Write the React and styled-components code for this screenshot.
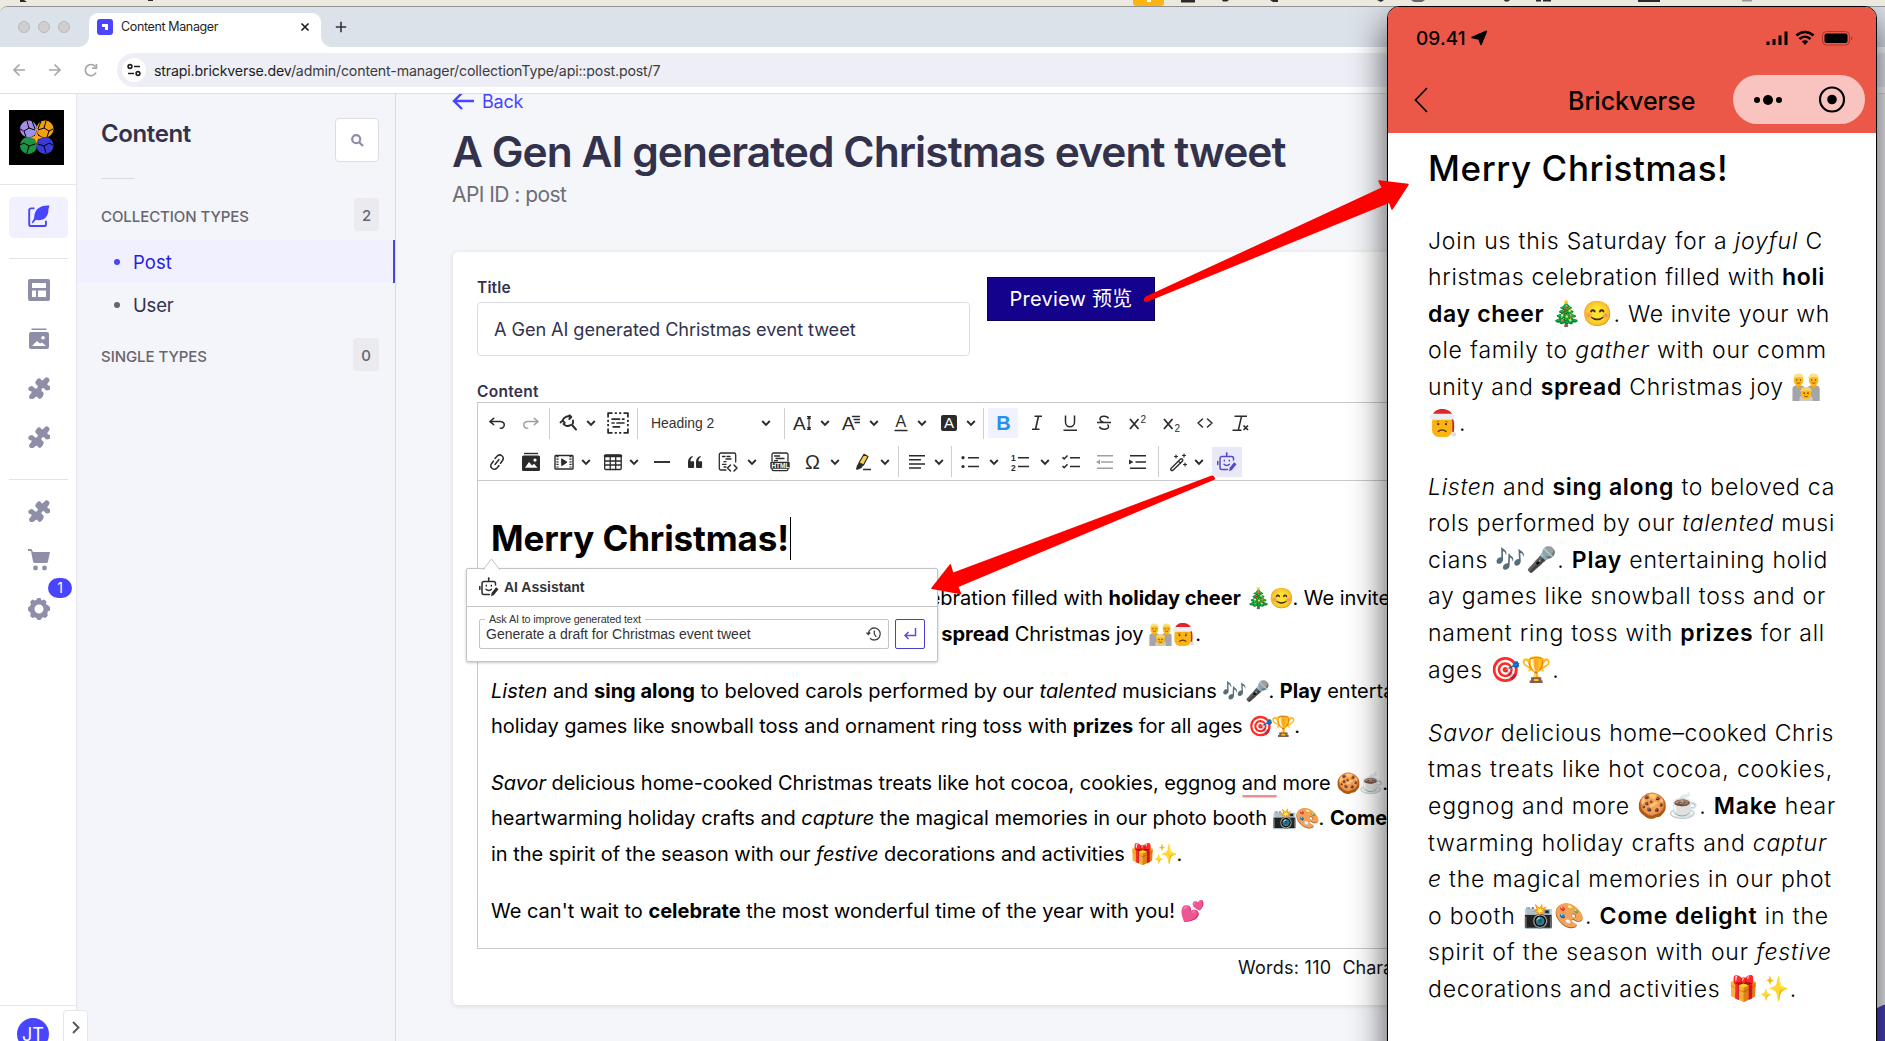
import React from "react";
import styled, { createGlobalStyle, css } from "styled-components";

const Global = createGlobalStyle`
  *, *::before, *::after { box-sizing: border-box; }
  html, body { margin: 0; padding: 0; }
  body { width: 1885px; height: 1041px; overflow: hidden; font-family: Inter, "Noto Sans CJK SC", "Liberation Sans", sans-serif; }
  h1, h2, p { margin: 0; font-weight: inherit; }
`;

const Desktop = styled.div`
  position: relative;
  width: 1885px;
  height: 1041px;
  overflow: hidden;
  display: flex;
  flex-direction: column;
  background: #ece9e0;
`;
const MenuBar = styled.div`
  height: 6px;
  flex: none;
  background: #ece9df;
  svg { display: block; }
`;
const Browser = styled.div`
  flex: 1;
  min-height: 0;
  display: flex;
  flex-direction: column;
  border-top: 1px solid #8f9092;
  border-top-left-radius: 8px;
  background: #fff;
  overflow: hidden;
`;
const Text = styled.span`
  white-space: pre;
  letter-spacing: ${(p) => p.$ls || 0}px;
`;

/* ---- tab strip ---- */
const TabStrip = styled.div`
  height: 40px;
  flex: none;
  display: flex;
  align-items: flex-end;
  background: #dce2e9;
`;
const Lights = styled.div`
  width: 89px;
  height: 40px;
  display: flex;
  align-items: center;
  gap: 8px;
  padding-left: 18px;
  background: #dce2e9;
`;
const Light = styled.i`
  width: 12px;
  height: 12px;
  border-radius: 50%;
  background: #cfcfcf;
  border: 1px solid #b9b9b9;
`;
const Tab = styled.div`
  position: relative;
  width: 232px;
  height: 34px;
  padding: 0 11px 6px 8px;
  display: flex;
  align-items: center;
  background: #fff;
  border-radius: 9px 9px 0 0;
  font-size: 12.5px;
  line-height: 16px;
  color: #1f1f1f;
  &::before, &::after {
    content: "";
    position: absolute;
    bottom: 0;
    width: 10px;
    height: 10px;
  }
  &::before { left: -10px; background: radial-gradient(circle at 0 0, #dce2e9 9.5px, #fff 10px); }
  &::after { right: -10px; background: radial-gradient(circle at 100% 0, #dce2e9 9.5px, #fff 10px); }
`;
const Favicon = styled.span`
  width: 16px;
  height: 16px;
  margin-right: 8px;
  border-radius: 3px;
  background: #4945ff;
  svg { display: block; }
`;
const TabClose = styled.svg`
  margin-left: auto;
`;
const NewTab = styled.svg`
  margin: 0 0 14px 14px;
`;

/* ---- address bar ---- */
const AddressRow = styled.div`
  height: 47px;
  flex: none;
  display: flex;
  align-items: center;
  border-bottom: 1px solid #dedfe3;
  background: #fff;
`;
const NavGlyphs = styled.svg`
  display: block;
  flex: none;
`;
const AddressField = styled.div`
  flex: 1;
  height: 34px;
  display: flex;
  align-items: center;
  padding-left: 5px;
  border-radius: 17px 0 0 17px;
  background: #edeef6;
  font-size: 14.2px;
  color: #3c3c40;
  b { font-weight: 400; color: #1d1d1f; }
`;
const SiteInfo = styled.span`
  width: 24px;
  height: 24px;
  margin-right: 8px;
  border-radius: 50%;
  background: #fff;
`;

/* ---- page ---- */
const Body = styled.div`
  flex: 1;
  min-height: 0;
  display: flex;
  background: #f5f6fa;
`;
const Rail = styled.nav`
  position: relative;
  width: 77px;
  flex: none;
  border-right: 1px solid #e3e3e9;
  background: #fff;
  display: flex;
  flex-direction: column;
`;
const RailLogo = styled.div`
  height: 91px;
  flex: none;
  padding: 16px 0 0 9px;
  border-bottom: 1px solid #e6e6ea;
  svg { display: block; }
`;
const RailItem = styled.div`
  position: relative;
  width: 59px;
  height: ${(p) => (p.$active ? 41 : 49)}px;
  margin-left: 9px;
  margin-top: ${(p) => p.$mt || 0}px;
  padding: ${(p) => (p.$active ? 8 : 13)}px 0 0 19px;
  flex: none;
  border-radius: 5px;
  background: ${(p) => (p.$active ? "#f0f0ff" : "transparent")};
  color: ${(p) => (p.$active ? "#4945ff" : "#8e8ea9")};
  svg { display: block; }
`;
const RailRule = styled.div`
  width: 59px;
  height: 1px;
  flex: none;
  margin: ${(p) => p.$m} 0 0 9px;
  background: #e3e3e9;
`;
const Badge = styled.span`
  position: absolute;
  top: -7px;
  left: 39px;
  width: 24px;
  height: 20px;
  border-radius: 10px;
  background: #4945ff;
  color: #fff;
  font-size: 14px;
  line-height: 20px;
  text-align: center;
`;
const RailFooter = styled.div`
  margin-top: auto;
  height: 36px;
  flex: none;
  border-top: 1px solid #e6e6ea;
  padding: 12px 0 0 17px;
  overflow: hidden;
`;
const Avatar = styled.div`
  width: 32px;
  height: 32px;
  border-radius: 50%;
  background: #4945ff;
  color: #fff;
  font-size: 18px;
  line-height: 33px;
  text-align: center;
`;
const Expand = styled.div`
  position: absolute;
  left: 63px;
  bottom: -9px;
  width: 25px;
  height: 40px;
  border: 1px solid #e6e6ea;
  border-radius: 4px;
  background: #fff;
  svg { display: block; }
`;
const SubNav = styled.aside`
  width: 319px;
  flex: none;
  border-right: 1px solid #d9dae2;
  background: #f4f5fa;
`;
const SubHead = styled.div`
  display: flex;
  justify-content: space-between;
  align-items: flex-start;
  padding: 24px 16px 0 24px;
  font-size: 24px;
  line-height: 32px;
  font-weight: 600;
  color: #32324d;
`;
const SearchBox = styled.div`
  width: 44px;
  height: 44px;
  border: 1px solid #dcdce4;
  border-radius: 4px;
  background: #fff;
  display: flex;
  align-items: center;
  justify-content: center;
`;
const SubRule = styled.div`
  width: 33px;
  height: 1px;
  margin: 16px 0 0 24px;
  background: #d9d9e0;
`;
const Group = styled.div`
  height: 33px;
  margin-top: ${(p) => p.$mt}px;
  padding: 0 16px 0 24px;
  display: flex;
  align-items: center;
  justify-content: space-between;
  font-size: 15px;
  line-height: 20px;
  font-weight: 500;
  color: #66666f;
  & > :first-child { padding-top: 4px; }
`;
const Count = styled.span`
  width: ${(p) => p.$w}px;
  height: 33px;
  border-radius: 4px;
  background: #eaeaef;
  text-align: center;
  line-height: 35px;
`;
const Entry = styled.div`
  height: 43px;
  margin-top: ${(p) => p.$mt || 0}px;
  padding-left: 37px;
  display: flex;
  align-items: center;
  font-size: 18.5px;
  color: ${(p) => (p.$active ? "#271fe0" : "#32324d")};
  background: ${(p) => (p.$active ? "#f0f0ff" : "transparent")};
  border-right: ${(p) => (p.$active ? "2px solid #4945d8" : "0")};
  i {
    width: 6px;
    height: 6px;
    margin-right: 13px;
    border-radius: 50%;
    background: ${(p) => (p.$active ? "#4945ff" : "#66666f")};
  }
`;

const Main = styled.main`
  flex: 1;
  min-width: 0;
  padding-left: 57px;
  display: flex;
  flex-direction: column;
  align-items: flex-start;
  overflow: hidden;
`;
const Back = styled.div`
  flex: none;
  margin: -4px 0 0 -1px;
  height: 22px;
  display: flex;
  align-items: center;
  gap: 8px;
  font-size: 18px;
  color: #4945ff;
`;
const PageTitle = styled.h1`
  flex: none;
  margin: 14px 0 0 -1px;
  font-size: 42.5px;
  line-height: 52px;
  font-weight: 600;
  color: #32324d;
`;
const ApiId = styled.div`
  flex: none;
  margin: 3px 0 0 -1px;
  font-size: 21px;
  line-height: 28px;
  color: #6d6d76;
`;
const Card = styled.section`
  flex: none;
  width: 1060px;
  height: 753px;
  margin-top: 43px;
  padding: 25px 25px 0;
  border-radius: 5px;
  background: #fff;
  box-shadow: 0 1px 5px rgba(33, 33, 52, 0.14);
`;
const TitleRow = styled.div`
  display: flex;
  gap: 17px;
  align-items: flex-start;
`;
const Label = styled.div`
  height: 20px;
  line-height: 22px;
  margin: ${(p) => p.$mt || 0}px 0 0 -1px;
  font-size: 15.5px;
  font-weight: 600;
  color: #32324d;
`;
const Input = styled.div`
  width: 493px;
  height: 54px;
  margin: 5px 0 0 -1px;
  padding-left: 16px;
  border: 1px solid #dcdce4;
  border-radius: 4px;
  font-size: 18.2px;
  line-height: 53px;
  color: #32324d;
`;
const Preview = styled.div`
  width: 168px;
  height: 44px;
  background: #14028c;
  border: 1px solid #0a0050;
  color: #fff;
  font-size: 20px;
  line-height: 43px;
  text-align: center;
`;
const Editor = styled.div`
  width: 1004px;
  height: 547px;
  margin: 1px 0 0 -1px;
  border: 1px solid #c9c9cd;
  color: #000;
`;
const ToolbarRow = styled.div`
  height: ${(p) => p.$h}px;
  display: flex;
  align-items: center;
  ${(p) => p.$last && css`border-bottom: 1px solid #c9c9cd;`}
`;
const Tool = styled.span`
  width: ${(p) => p.$w || 20}px;
  height: ${(p) => (p.$on ? 30 : 20)}px;
  margin-left: ${(p) => p.$g}px;
  flex: none;
  display: flex;
  align-items: center;
  justify-content: center;
  background: ${(p) => p.$on || "transparent"};
  svg { display: block; overflow: visible; }
`;
const Divider = styled.span`
  width: 1px;
  height: 31px;
  margin-left: ${(p) => p.$g}px;
  flex: none;
  background: #ccced1;
`;
const HeadingSelect = styled.span`
  width: 110px;
  margin-left: 13px;
  flex: none;
  font-family: "Liberation Sans", Arial, sans-serif;
  font-size: 13.9px;
  line-height: 18px;
  color: #333;
`;
const Copy = styled.div`
  padding: 35px 0 0 13px;
`;
const EditorHeading = styled.h2`
  display: flex;
  align-items: center;
  height: 44px;
  margin-bottom: 21.4px;
  font-size: 35px;
  font-weight: 700;
`;
const Caret = styled.i`
  width: 1px;
  height: 43px;
  margin-left: 1px;
  background: #000;
`;
const Para = styled.p`
  margin-bottom: 21px;
  font-size: 20px;
  b { font-weight: 700; }
`;
const Line = styled.span`
  display: block;
  height: 35.6px;
  line-height: 35.6px;
  white-space: pre;
  letter-spacing: ${(p) => p.$ls || 0}px;
`;
const Emo = styled.span`
  display: inline-block;
  width: 1.15em;
  height: 1em;
  line-height: 1em;
  letter-spacing: 0;
  text-align: center;
  font-family: "Noto Color Emoji", sans-serif;
  svg { width: 1.15em; height: 1.15em; vertical-align: -0.24em; }
`;
const Misspelled = styled.span`
  box-shadow: 0 3px 0 -0.5px #f28b8b;
  display: inline-block;
  line-height: 24px;
`;
const Counts = styled.div`
  display: flex;
  gap: 11px;
  margin: 7px 0 0 760px;
  font-size: 18px;
  line-height: 24px;
  color: #111;
`;

/* ---- AI assistant balloon ---- */
const Balloon = styled.div`
  position: absolute;
  left: 466px;
  top: 568px;
  width: 472px;
  height: 94px;
  border: 1px solid #c4c4c8;
  border-radius: 2px;
  background: #fff;
  box-shadow: 0 1px 3px rgba(0, 0, 0, 0.22);
  font-family: "Liberation Sans", Arial, sans-serif;
  color: #333;
`;
const BalloonTip = styled.svg`
  position: absolute;
  left: 15px;
  top: -11px;
`;
const BalloonHead = styled.div`
  height: 38px;
  padding: 0 0 1px 12px;
  display: flex;
  align-items: center;
  gap: 5px;
  border-bottom: 1px solid #c4c4c8;
  font-size: 14px;
  font-weight: 700;
`;
const BalloonBody = styled.div`
  display: flex;
  gap: 6px;
  padding: 12px 0 0 12px;
`;
const Prompt = styled.div`
  position: relative;
  width: 410px;
  height: 30px;
  padding: 0 6px 0 6px;
  display: flex;
  align-items: center;
  justify-content: space-between;
  border: 1px solid #c4c4c8;
  border-radius: 2px;
  font-size: 14px;
  line-height: 28px;
`;
const PromptLabel = styled.span`
  position: absolute;
  left: 5px;
  top: -8px;
  padding: 0 4px;
  background: #fff;
  font-size: 10.8px;
  line-height: 14px;
`;
const Submit = styled.div`
  width: 30px;
  height: 30px;
  border: 1px solid #4a40c8;
  border-radius: 2px;
  display: flex;
  align-items: center;
  justify-content: center;
`;

/* ---- phone ---- */
const Phone = styled.section`
  position: absolute;
  left: 1387px;
  top: 6px;
  width: 490px;
  height: 1100px;
  border: 1px solid #000;
  border-radius: 12px;
  overflow: hidden;
  background: #fff;
`;
const PhoneShade = styled.div`
  position: absolute;
  left: 1387px;
  top: 8px;
  width: 490px;
  height: 1100px;
  border-radius: 12px;
  box-shadow: 0 14px 36px rgba(0, 0, 0, 0.7);
  clip-path: inset(-1px -20px -20px -60px);
`;
const PhoneHead = styled.header`
  height: 126px;
  background: #eb5847;
  color: #000;
`;
const StatusBar = styled.div`
  height: 61px;
  padding: 1px 22px 0 28px;
  display: flex;
  align-items: center;
  font-size: 19px;
  font-weight: 500;
  svg { display: block; }
`;
const LocationArrow = styled.svg`
  margin-left: 4px;
`;
const StatusIcons = styled.svg`
  margin-left: auto;
`;
const NavRow = styled.div`
  height: 65px;
  display: flex;
  align-items: center;
  padding: 0 11px 2px 26px;
  font-size: 25px;
  font-weight: 500;
`;
const NavTitle = styled.div`
  width: 127px;
  margin-left: 140px;
  padding-top: 2px;
`;
const Capsule = styled.div`
  width: 132px;
  height: 49px;
  margin-left: auto;
  border-radius: 25px;
  background: #f9c4bf;
  svg { display: block; }
`;
const PhoneCopy = styled.div`
  padding: 13px 0 0 40px;
  font-size: 23px;
  font-weight: 350;
  b { font-weight: 600; }
  ${Emo} { width: 31px; font-size: 24.5px; }
  ${Line} { height: 36.6px; line-height: 36.6px; }
`;
const PhoneHeading = styled.h2`
  height: 44px;
  margin-bottom: 32.5px;
  font-size: 35px;
  line-height: 44px;
  font-weight: 500;
`;
const PhonePara = styled.p`
  margin-bottom: 26.6px;
`;
const Overlay = styled.svg`
  position: absolute;
  left: 0;
  top: 0;
  pointer-events: none;
`;
const HelpBubble = styled.i`
  position: absolute;
  left: 1864px;
  top: 940px;
  width: 60px;
  height: 60px;
  margin-top: 63px;
  border-radius: 50%;
  background: #4a42c4;
`;

/* ---- icons ---- */
const Ico = ({ children, s = 20, ...p }) => (
  <svg width={s} height={s} viewBox="0 0 20 20" fill="none" stroke="#2b2b2b" strokeWidth="1.5" strokeLinecap="round" strokeLinejoin="round" {...p}>
    {children}
  </svg>
);
const Chev = ({ g }) => (
  <Tool $g={g} $w={10}>
    <svg width="10" height="10" viewBox="0 0 10 10" fill="none" stroke="#2b2b2b" strokeWidth="1.9"><path d="M1.2 3l3.8 3.8L8.8 3" /></svg>
  </Tool>
);
const T = ({ x, y, size, children, ...p }) => (
  <text x={x} y={y} fontSize={size} stroke="none" fill="#2b2b2b" fontFamily="Liberation Sans, Arial, sans-serif" {...p}>{children}</text>
);
const UndoPath = "m5.042 9.367 2.189 1.837a.75.75 0 0 1-.965 1.149l-3.788-3.18a.747.747 0 0 1-.21-.284.75.75 0 0 1 .17-.945L6.23 4.762a.75.75 0 1 1 .964 1.15L4.863 7.866h8.917A.75.75 0 0 1 14 7.9a4 4 0 1 1-1.477 7.718l.344-1.489a2.5 2.5 0 1 0 1.094-4.73l.008-.032H5.042z";
const Robot = ({ c = "#2b2b2b", s = 20 }) => (
  <svg width={s} height={s} viewBox="0 0 20 20" fill="none" stroke={c} strokeWidth="1.5" strokeLinecap="round" strokeLinejoin="round">
    <path d="M10.5 17.5H5a2 2 0 0 1-2-2V6.500a2 2 0 0 1 2-2h9.500a2 2 0 0 1 2 2v1.500M9.700 4.300V2M.800 9.500v3" />
    <circle cx="9.700" cy="1.300" r="1" fill={c} stroke="none" />
    <path d="M7.300 8.300v.8M12.300 8.300v.8M7 12.300c1.500 1.600 4 1.600 5.500 0" strokeWidth="1.400" />
    <path d="M18.300 11.200l-4.800 6" strokeWidth="3" strokeLinecap="butt" />
    <path d="M12.800 16l-.8 3.200 3-1.300z" fill={c} stroke="none" />
  </svg>
);
const Puzzle = () => (
  <svg width="22" height="22" viewBox="0.300 0.300 23.400 23.400" fill="currentColor">
    <path d="M10 3a2.400 2.400 0 0 1 4.200 0l.8 1.100 1.300-.5 1.600-1.800a2.900 2.900 0 0 1 4.500 3.700l-1.500 2 .3 1.600 1.600.4a2.400 2.400 0 0 1 0 4.500l-2.200.7-1.700-.7-1.100-1.400a2 2 0 0 0-2.800 2.800l1.400 1.200.7 1.600-.8 2.300-1.400 1.900a2.400 2.400 0 0 1-4.200 0l-.8-1.300-1.400.5-2.100 1.600a2.700 2.700 0 0 1-4-4l1.700-2.200-.2-1.500-1.800-.4a2.400 2.400 0 0 1 0-4.500l1.900-.7 1.700.5 1.500 1.500a2 2 0 0 0 2.900-2.800L8.700 8 8 6.400l.6-1.900z" />
  </svg>
);
const Parent = ({ x }) => (
  <g transform={`translate(${x} 0)`}>
    <path d="M.5 30V17c0-3 2.500-4 6.500-4s6.500 1 6.500 4v13z" fill="#a3a5aa" />
    <path d="M5 12h4v3.500L7 17l-2-1.500z" fill="#f4a810" />
    <rect x="2" y="2" width="10" height="11.500" rx="4.800" fill="#fcb91c" />
    <path d="M1.500 6C1.500 2 3.500.5 7 .5S12.500 2 12.500 6L11 4.800 7 4.200 3 4.800z" fill="#fbe08a" />
    <circle cx="5" cy="7.500" r=".8" fill="#6b3a10" /><circle cx="9" cy="7.500" r=".8" fill="#6b3a10" />
    <path d="M5 10.300q2 1.500 4 0" fill="none" stroke="#8a4a10" />
  </g>
);
const Family = () => (
  <svg viewBox="0 0 30 30">
    <Parent x={0} /><Parent x={16} />
    <path d="M8 30v-3c0-2 2.500-3.500 7-3.500s7 1.500 7 3.500v3z" fill="#c9cbd0" />
    <rect x="9.500" y="16" width="11" height="12" rx="5.200" fill="#fcb91c" />
    <path d="M9 20c0-4 2.500-5.200 6-5.200s6 1.200 6 5.200l-2-1.200h-8z" fill="#f8d45c" />
    <circle cx="13" cy="21.500" r=".9" fill="#6b3a10" /><circle cx="17" cy="21.500" r=".9" fill="#6b3a10" />
    <path d="M13 24.500q2 1.800 4 0" fill="none" stroke="#8a4a10" />
  </svg>
);
const Santa = () => (
  <svg viewBox="1 1 29 29">
    <path d="M22 6c5 3 5.500 11 4.500 19l-2.500-1z" fill="#c8242c" />
    <path d="M4 9C6 3 9 1 14.500 1S24 3 26 9z" fill="#e0242c" />
    <rect x="4" y="7" width="21" height="23" rx="7.500" fill="#fbb416" />
    <rect x="2" y="6" width="25" height="6" rx="3" fill="#eceef2" />
    <circle cx="26.500" cy="27" r="2.300" fill="#d9dce2" />
    <path d="M8.500 14.500l3-1M20.500 14.500l-3-1" stroke="#a86a08" strokeWidth="1" />
    <circle cx="10.500" cy="16.500" r="1.200" fill="#5a3208" /><circle cx="18.500" cy="16.500" r="1.200" fill="#5a3208" />
    <path d="M10 24.500q4.500-4 9 0" fill="none" stroke="#5a3208" strokeWidth="1.400" />
  </svg>
);

export default function App() {
  return (
    <>
      <Global />
      <Desktop>
        <MenuBar>
          <svg width="1885" height="6">
            <g fill="#2a2a2a">
              <path d="M20 0h4l3 2h-7zM148 0h5v1h-5z" />
              <path d="M1181 0h14v2.500h-14zM1222 0h7l-2 1.500h-4zM1270 0h8v2h-5zM1377 0h7l-3 2zM1504 0h6l-2 1.500h-3zM1536 0h5v1.500h-5zM1543 0h8v1.500h-8zM1638 0h22v2h-22z" />
              <path d="M1411 0h14l-3 2h-8z" fill="#666" />
              <path d="M1742 0h10v1.500h-10z" fill="#999" />
            </g>
            <path d="M1133 0h31v3a3 3 0 0 1-3 3h-25a3 3 0 0 1-3-3z" fill="#fdb515" />
            <path d="M1147 0h4v2h-4z" fill="#fff" />
          </svg>
        </MenuBar>
        <Browser>
          <TabStrip>
            <Lights><Light /><Light /><Light /></Lights>
            <Tab>
              <Favicon><svg width="16" height="16"><path d="M5 5h6v6H8V8H5z" fill="#fff" /></svg></Favicon>
              <Text $ls={-0.37}>Content Manager</Text>
              <TabClose width="10" height="10" stroke="#1f1f1f" strokeWidth="1.7"><path d="M1.500 1.500l7 7M8.500 1.500l-7 7" /></TabClose>
            </Tab>
            <NewTab width="12" height="12" stroke="#333" strokeWidth="1.6"><path d="M6 .8v10.400M.8 6h10.400" /></NewTab>
          </TabStrip>
          <AddressRow>
            <NavGlyphs width="117" height="46" fill="none" stroke="#a6a7aa" strokeWidth="1.700">
              <path d="M25 23H14M19.500 17.500L14 23l5.500 5.500M49 23h11M54.500 17.500L60 23l-5.500 5.500" />
              <path d="M96 25.500a5.600 5.600 0 1 1-.8-6M96.400 17v4.200h-4.200" />
            </NavGlyphs>
            <AddressField>
              <SiteInfo>
                <svg width="24" height="24" fill="none" stroke="#1f1f1f" strokeWidth="1.600"><circle cx="8" cy="8.500" r="1.900" /><path d="M12 8.500h6M6 15.500h6" /><circle cx="16" cy="15.500" r="1.900" /></svg>
              </SiteInfo>
              <Text $ls={-0.16}><b>strapi.brickverse.dev</b>/admin/content-manager/collectionType/api::post.post/7</Text>
            </AddressField>
          </AddressRow>
          <Body>
            <Rail>
              <RailLogo>
                <svg width="55" height="55" viewBox="0 0 55 55">
                  <rect width="55" height="55" fill="#000" />
                  <circle cx="19.500" cy="19" r="8.500" fill="#9c92ea" />
                  <circle cx="36" cy="19" r="8.500" fill="#f0a010" />
                  <circle cx="19.500" cy="35.500" r="8.500" fill="#1e9144" />
                  <circle cx="36" cy="35.500" r="8.500" fill="#3a3ad8" />
                  <g stroke="#000" strokeWidth="1" fill="none">
                    <path d="M15 21l5-3 6 2M20 18l-2-7M15 21l-4-2M15 21l2 6M40 21l-5-3-6 2M35 18l2-7M40 21l4-2M40 21l-2 6M15 33l5 3 6-2M20 36l-2 7M15 33l-4 2M40 33l-5 3-6-2M35 36l2 7M40 33l4 2M23 11l3 8M32 11l-3 8" />
                  </g>
                  <path d="M27.500 21.500l1.800 4.200 4.200 1.800-4.200 1.800-1.800 4.200-1.800-4.200-4.200-1.800 4.200-1.800z" fill="#ffa318" />
                  <circle cx="19" cy="15" r="1" fill="#e815a0" /><circle cx="14" cy="21" r="1" fill="#e815a0" />
                </svg>
              </RailLogo>
              <RailItem $active $mt={12}>
                <svg width="22" height="22" viewBox="1.500 0.500 22.500 23" fill="none">
                  <path d="M8 4H4.500A2 2 0 0 0 2.500 6v14.500a2 2 0 0 0 2 2H18a2 2 0 0 0 2-2V17" stroke="currentColor" strokeWidth="2" />
                  <path d="M23.500 1C15 .5 9 4 8 11l-.5 3.500L5 19l1.300.6L9.500 16c7 1.500 12-2 13-8.500-.3-2.500 1-4 1-6.500z" fill="currentColor" />
                </svg>
              </RailItem>
              <RailRule $m="20px" />
              <RailItem $mt={7}>
                <svg width="22" height="22" fill="currentColor"><path fillRule="evenodd" d="M2 0h18a2 2 0 0 1 2 2v18a2 2 0 0 1-2 2H2a2 2 0 0 1-2-2V2a2 2 0 0 1 2-2zm2 4v5h14V4zm0 7.500V18h4v-6.500zm6 0V18h8v-6.500z" /></svg>
              </RailItem>
              <RailItem>
                <svg width="22" height="22" fill="currentColor"><path d="M3.500.5h15V2h-15z" /><path fillRule="evenodd" d="M3 4h16a2 2 0 0 1 2 2v13a2 2 0 0 1-2 2H3a2 2 0 0 1-2-2V6a2 2 0 0 1 2-2zm12 4a1.800 1.800 0 1 0 0 3.600A1.800 1.800 0 0 0 15 8zM4 18h14l-4-3.500-2 1-3-2.500z" /></svg>
              </RailItem>
              <RailItem><Puzzle /></RailItem>
              <RailItem><Puzzle /></RailItem>
              <RailRule $m="17px" />
              <RailItem $mt={7}><Puzzle /></RailItem>
              <RailItem>
                <svg width="22" height="22" fill="currentColor"><path d="M0 0h3.500L5 3h17l-2 9.500a2 2 0 0 1-2 1.500H7a2 2 0 0 1-2-1.500L3 2H0z" /><circle cx="7.500" cy="19" r="2.400" /><circle cx="16.500" cy="19" r="2.400" /></svg>
              </RailItem>
              <RailItem>
                <svg width="22" height="22" viewBox="0 0 22 22" fill="currentColor"><path fillRule="evenodd" d="M9.500 0h3l1 2.500 2.700-1 2.300 2-.6 2.700 2.600 1.300L22 9.500v3l-2.300.9-.3 2.400.3 2-2.200 2.200-2.500-.7-1.500 1L12.500 22h-3l-1-2-1.700-.7-2.500.7L2.200 18l.5-2.400-.8-1.700L0 12.500v-3l2-1.500.8-1.500-.6-2.700 2.200-2.200 2.300.9 1.800-.8zM11 6.500a4.500 4.500 0 1 0 0 9 4.500 4.500 0 0 0 0-9z" /></svg>
                <Badge>1</Badge>
              </RailItem>
              <RailFooter><Avatar>JT</Avatar></RailFooter>
              <Expand><svg width="23" height="34" fill="none" stroke="#55555c" strokeWidth="1.900"><path d="M9 11l5.500 5.500L9 22" /></svg></Expand>
            </Rail>
            <SubNav>
              <SubHead>
                <Text $ls={-0.37}>Content</Text>
                <SearchBox><svg width="13" height="13" fill="none" stroke="#8e8ea9" strokeWidth="2.200"><circle cx="5.200" cy="5.200" r="4" /><path d="M8.200 8.200l3.800 3.800" /></svg></SearchBox>
              </SubHead>
              <SubRule />
              <Group $mt={19}><Text $ls={-0.07}>COLLECTION TYPES</Text><Count $w={25}>2</Count></Group>
              <Entry $active $mt={9}><i /><Text $ls={0.1}>Post</Text></Entry>
              <Entry><i /><Text $ls={-0.2}>User</Text></Entry>
              <Group $mt={12}><Text $ls={-0.06}>SINGLE TYPES</Text><Count $w={26}>0</Count></Group>
            </SubNav>
            <Main>
              <Back>
                <svg width="22" height="18" fill="none" stroke="#4945ff" strokeWidth="2.400"><path d="M22 9H2M10 1L2 9l8 8" /></svg>
                <Text $ls={-0.2}>Back</Text>
              </Back>
              <PageTitle><Text $ls={-0.95}>A Gen AI generated Christmas event tweet</Text></PageTitle>
              <ApiId><Text $ls={-0.55}>API ID : post</Text></ApiId>
              <Card>
                <TitleRow>
                  <div>
                    <Label><Text $ls={0.15}>Title</Text></Label>
                    <Input><Text $ls={-0.1}>A Gen AI generated Christmas event tweet</Text></Input>
                  </div>
                  <Preview><Text $ls={0.25}>Preview 预览</Text></Preview>
                </TitleRow>
                <Label $mt={25}><Text $ls={0.3}>Content</Text></Label>
                <Editor>
                  <ToolbarRow $h={40}>
                    <Tool $g={9}><Ico><path d={UndoPath} fill="#2b2b2b" stroke="none" /></Ico></Tool>
                    <Tool $g={14}><Ico transform="scale(-1 1)"><path d={UndoPath} fill="#a0a0a0" stroke="none" /></Ico></Tool>
                    <Divider $g={8} />
                    <Tool $g={8}><Ico strokeWidth="1.900"><path d="M4.500 7.500A6 6 0 0 1 13 4M12.500 12a5 5 0 0 1-7-1M2.500 9.500l2.300-2 2 2.300M11.500 2.300L13.300 4l-2 2M15 7.500c.5 2 0 3-1 4.500l4 4.500" /></Ico></Tool>
                    <Chev g={8} />
                    <Tool $g={11} $w={22}>
                      <Ico s={22} strokeLinecap="butt"><path d="M1 5V1h4M15 1h4v4M19 15v4h-4M5 19H1v-4" strokeWidth="1.600" /><path d="M7 1h2M11 1h2M7 19h2M11 19h2M1 7v2M1 11v2M19 7v2M19 11v2" strokeWidth="1.600" /><path d="M4 6.500h8M13.500 6.500H16M4 10h3M8.500 10H16M5 13.500h7" strokeWidth="1.500" /></Ico>
                    </Tool>
                    <Divider $g={8} />
                    <HeadingSelect><Text>Heading 2</Text></HeadingSelect>
                    <Chev g={0} />
                    <Divider $g={13} />
                    <Tool $g={8}><Ico><T x="0" y="17" size="19">A</T><path d="M16 3.500v13M14.500 3.500h3M14.500 16.500h3M14.700 5.500l1.300-1.500 1.300 1.500M14.700 14.500l1.300 1.500 1.300-1.500" strokeWidth="1.200" /></Ico></Tool>
                    <Chev g={7} />
                    <Tool $g={12}><Ico><T x="0" y="17" size="19">A</T><path d="M10.500 3.500h7M12 6.500h5.500M13 9.500h4.500" strokeWidth="1.300" /></Ico></Tool>
                    <Chev g={7} />
                    <Tool $g={12}><Ico><T x="4.500" y="14" size="16">A</T><path d="M3.500 17.500h13" strokeLinecap="butt" /></Ico></Tool>
                    <Chev g={6} />
                    <Tool $g={12}><Ico><rect x="2" y="2" width="16" height="16" rx="2" fill="#2b2b2b" stroke="none" /><T x="5" y="15.200" size="15" fill="#fff">A</T></Ico></Tool>
                    <Chev g={7} />
                    <Divider $g={7} />
                    <Tool $g={4} $w={30} $on="#f0f2ff"><Ico><T x="3.200" y="17" size="20" fontWeight="700" fill="#2490f0">B</T></Ico></Tool>
                    <Tool $g={9}><Ico strokeWidth="1.600" strokeLinecap="butt"><path d="M7.500 3.300H15M5 16.300h7.500M11.500 3.300l-3 13" /></Ico></Tool>
                    <Tool $g={13}><Ico strokeWidth="1.500" strokeLinecap="butt"><path d="M5.500 2.500v6.700a4.500 4.500 0 0 0 9 0V2.500M3.500 17.200h13.500" /></Ico></Tool>
                    <Tool $g={14}><Ico strokeWidth="1.500" strokeLinecap="butt"><path d="M14.500 5.500C13.500 2.500 6 2.300 6 6c0 1.500 1 2.500 3.500 3.200M3 9.500h14M5.500 13.500c1 3.500 9 3.700 9 .3 0-1-.3-1.700-1-2.300" /></Ico></Tool>
                    <Tool $g={14}><Ico strokeWidth="1.800" strokeLinecap="butt"><path d="M2 6l8.500 10M10.500 6L2 16" /><T x="12.500" y="10" size="10">2</T></Ico></Tool>
                    <Tool $g={14}><Ico strokeWidth="1.800" strokeLinecap="butt"><path d="M2 6l8.500 10M10.500 6L2 16" /><T x="12.500" y="18.500" size="10">2</T></Ico></Tool>
                    <Tool $g={13}><Ico><path d="M7.500 6L3 10l4.500 4M12.500 6l4.500 4-4.500 4" /></Ico></Tool>
                    <Tool $g={15}><Ico strokeLinecap="butt"><path d="M4.500 3.300H17M2.500 17.200h9M11.500 3.300L8.500 16.500" /><path d="M13.500 12.500l4.500 4.500M18 12.500L13.500 17" strokeWidth="1.700" /></Ico></Tool>
                  </ToolbarRow>
                  <ToolbarRow $h={38} $last>
                    <Tool $g={9}><Ico strokeWidth="1.500"><path d="M8 6.500l2-2.300c3-3.200 8 .5 5.500 4.300l-2 2.700M12 13.500l-2 2.500c-3 3.200-8-.5-5.500-4.300l2-2.700M8 12.500l4-5" /></Ico></Tool>
                    <Tool $g={14}><Ico stroke="none" fill="#2b2b2b"><path d="M3 .8h14v1.400H3z" /><path fillRule="evenodd" d="M2.500 3.500h15a1.500 1.500 0 0 1 1.500 1.500v12.500a1.500 1.500 0 0 1-1.500 1.500h-15A1.500 1.500 0 0 1 1 17.500V5a1.500 1.500 0 0 1 1.500-1.500zm11.500 3a1.600 1.600 0 1 0 0 3.200 1.600 1.600 0 0 0 0-3.200zM4 15.800h12.500l-3.500-4-2 1.700-3-3.500z" /></Ico></Tool>
                    <Tool $g={13}><Ico><rect x="1" y="3.500" width="18" height="13.500" rx=".8" strokeWidth="1.400" /><path d="M3.500 4v12.500M16.500 4v12.500" strokeDasharray="1.200 1.400" strokeWidth="2.200" strokeLinecap="butt" /><path d="M8 7l5 3.200-5 3.200z" fill="#2b2b2b" strokeWidth="1" /></Ico></Tool>
                    <Chev g={7} />
                    <Tool $g={12}><Ico strokeWidth="1.300"><rect x="1.700" y="3" width="16.500" height="14.500" rx="1" /><path d="M2 4h16" strokeWidth="2.600" /><path d="M2 9h16M2 13h16M7.200 4v13.500M12.700 4v13.500" /></Ico></Tool>
                    <Chev g={6} />
                    <Tool $g={13}><Ico strokeWidth="1.900" strokeLinecap="butt"><path d="M2 10h16" /></Ico></Tool>
                    <Tool $g={13}><Ico stroke="none" fill="#2b2b2b"><path d="M3 10.400a4 4 0 0 1 0-.4c.1-3 1.300-4.800 4.300-6l.7.800C6.200 6 5.400 7.500 5.500 9.200h2.600a1 1 0 0 1 1 1V15a1 1 0 0 1-1 1H4a1 1 0 0 1-1-1zM11 10.400a4 4 0 0 1 0-.4c.1-3 1.300-4.800 4.300-6l.7.800c-1.800 1.200-2.600 2.700-2.500 4.400h2.600a1 1 0 0 1 1 1V15a1 1 0 0 1-1 1H12a1 1 0 0 1-1-1z" /></Ico></Tool>
                    <Tool $g={13}><Ico strokeWidth="1.300"><path d="M8 18H3a1.700 1.700 0 0 1-1.700-1.700V2.700A1.700 1.700 0 0 1 3 1h13a1.700 1.700 0 0 1 1.700 1.700V10M4.500 4.500H7M8 7h5M6 9.700h2M4.500 12.300H8M6 15h2M9 4.500h3" /><path d="M12.500 13l-3 3 3 3M16 13l3 3-3 3" strokeWidth="1.500" /></Ico></Tool>
                    <Chev g={9} />
                    <Tool $g={13}><Ico strokeWidth="1.300"><path d="M2 9V2.700A1.700 1.700 0 0 1 3.700 1h12.600A1.700 1.700 0 0 1 18 2.700V9M2 17c0 1 .8 1.700 1.700 1.700h12.600c1 0 1.700-.7 1.700-1.700M4.500 4h5M6 6.500h8M4.500 8.700h3" /><rect x=".3" y="9.700" width="19.400" height="7" rx="1" fill="#2b2b2b" stroke="none" /><T x="1.400" y="15.600" size="6.500" fill="#fff" fontWeight="700">HTML</T></Ico></Tool>
                    <Tool $g={13}><Ico><T x="2" y="17" size="20">Ω</T></Ico></Tool>
                    <Chev g={7} />
                    <Tool $g={12}><Ico><path d="M12 2.300l4 2.200-4.500 8.500-4.500-2.300z" fill="#f8cf50" strokeWidth="1.200" /><path d="M7 10.500l4.500 2.500-2 3-4.500 2-1-1 1-3.500z" fill="#2b2b2b" stroke="none" /><path d="M11 17.500h8" strokeLinecap="butt" /></Ico></Tool>
                    <Chev g={8} />
                    <Divider $g={8} />
                    <Tool $g={8}><Ico strokeWidth="1.500" strokeLinecap="butt"><path d="M2 3.700h16M2 7.800h12M2 11.900h16M2 16h12" /></Ico></Tool>
                    <Chev g={7} />
                    <Divider $g={7} />
                    <Tool $g={8}><Ico strokeLinecap="butt"><path d="M8 5.700h11M8 14.500h11" /><circle cx="3" cy="5.700" r="1.600" fill="#2b2b2b" stroke="none" /><circle cx="3" cy="14.500" r="1.600" fill="#2b2b2b" stroke="none" /></Ico></Tool>
                    <Chev g={9} />
                    <Tool $g={11}><Ico strokeLinecap="butt"><path d="M8 5.700h11M8 14.500h11" /><T x="1" y="8.500" size="8.500" fontWeight="700">1</T><T x="1" y="18.500" size="8.500" fontWeight="700">2</T></Ico></Tool>
                    <Chev g={10} />
                    <Tool $g={11}><Ico strokeLinecap="butt"><path d="M9 5.700h10M9 14.500h10M1.500 5.200l1.700 1.700 3.300-3.500M1.500 14l1.700 1.700 3.300-3.500" /></Ico></Tool>
                    <Tool $g={14}><Ico stroke="#a0a0a0" strokeLinecap="butt"><path d="M2 3.700h16M6 10h12M2 16.300h16" /><path d="M1 10l4-2.500v5z" fill="#a0a0a0" stroke="none" /></Ico></Tool>
                    <Tool $g={13}><Ico strokeLinecap="butt"><path d="M2 3.700h16M7.500 10H18M2 16.300h16" /><path d="M5.500 10L1 7.500v5z" fill="#2b2b2b" stroke="none" /></Ico></Tool>
                    <Divider $g={10} />
                    <Tool $g={9}><Ico strokeWidth="1.400"><path d="M3 16.500L12.500 7c1-.8 3 1 2 2L5 18.200c-1.300 1-3-.6-2-1.700zM10.500 9l2 2.200" /><path d="M8 3v3M6.500 4.500h3M16 2v3M14.500 3.500h3M17 11v3M15.500 12.500h3" strokeWidth="1.200" /></Ico></Tool>
                    <Chev g={6} />
                    <Tool $g={8} $w={30} $on="#e9e8f8"><Robot c="#5348c8" /></Tool>
                  </ToolbarRow>
                  <Copy>
                    <EditorHeading><Text $ls={-0.12}>Merry Christmas!</Text><Caret /></EditorHeading>
                    <Para>
                      <Line $ls={-0.015}>Join us this Saturday for a <i>joyful</i> Christmas celebration filled with <b>holiday cheer</b> <Emo>🎄</Emo><Emo>😊</Emo>. We invite your</Line>
                      <Line>whole family to <i>gather</i> with our community and <b>spread</b> Christmas joy <Emo><Family /></Emo><Emo><Santa /></Emo>.</Line>
                    </Para>
                    <Para>
                      <Line $ls={0.003}><i>Listen</i> and <b>sing along</b> to beloved carols performed by our <i>talented</i> musicians <Emo>🎶</Emo><Emo>🎤</Emo>. <b>Play</b> entertaining</Line>
                      <Line $ls={-0.035}>holiday games like snowball toss and ornament ring toss with <b>prizes</b> for all ages <Emo>🎯</Emo><Emo>🏆</Emo>.</Line>
                    </Para>
                    <Para>
                      <Line $ls={-0.052}><i>Savor</i> delicious home-cooked Christmas treats like hot cocoa, cookies, eggnog <Misspelled>and</Misspelled> more <Emo>🍪</Emo><Emo>☕</Emo>. <b>Make</b></Line>
                      <Line $ls={-0.022}>heartwarming holiday crafts and <i>capture</i> the magical memories in our photo booth <Emo>📸</Emo><Emo>🎨</Emo>. <b>Come delight</b></Line>
                      <Line $ls={-0.05}>in the spirit of the season with our <i>festive</i> decorations and activities <Emo>🎁</Emo><Emo>✨</Emo>.</Line>
                    </Para>
                    <Para>
                      <Line $ls={0}>We can't wait to <b>celebrate</b> the most wonderful time of the year with you! <Emo>💕</Emo></Line>
                    </Para>
                  </Copy>
                </Editor>
                <Counts><Text $ls={0.25}>Words: 110</Text><Text>Characters: 640</Text></Counts>
              </Card>
            </Main>
          </Body>
        </Browser>

        <Balloon>
          <BalloonTip width="20" height="12"><path d="M1 12L9.500 1 18 12" fill="#fff" stroke="#c4c4c8" /></BalloonTip>
          <BalloonHead><Robot s={20} /><Text>AI Assistant</Text></BalloonHead>
          <BalloonBody>
            <Prompt>
              <PromptLabel><Text $ls={-0.13}>Ask AI to improve generated text</Text></PromptLabel>
              <Text>Generate a draft for Christmas event tweet</Text>
              <svg width="16" height="16" viewBox="0 0 16 16" fill="none" stroke="#444" strokeWidth="1.300"><path d="M2.300 8A6 6 0 1 1 4 12.200M.5 6.500L2.300 8.500 4.300 6.500M8.300 4.500V8l2 3" /></svg>
            </Prompt>
            <Submit><svg width="14" height="14" fill="none" stroke="#5a50d0" strokeWidth="1.500"><path d="M12.500 1v7.500H2M5.500 5L2 8.500 5.500 12" /></svg></Submit>
          </BalloonBody>
        </Balloon>

        <HelpBubble />
        <PhoneShade />
        <Phone>
          <PhoneHead>
            <StatusBar>
              <Text $ls={0.1}>09.41</Text>
              <LocationArrow width="20" height="18"><path d="M16.500 2.200L11 15.500 9 10 2 8.500z" fill="#000" stroke="#000" strokeWidth="1.500" strokeLinejoin="round" /></LocationArrow>
              <StatusIcons width="88" height="18">
                <path d="M.5 12.500h3v3.500h-3zM6.500 10h3v6h-3zM12.500 6.500h3v9.500h-3zM18.500 2.500h3V16h-3z" />
                <path d="M30.500 6.500c5-4.700 12-4.700 17 0M33.500 10c3.300-3 7.700-3 11 0" fill="none" stroke="#000" strokeWidth="2.600" />
                <path d="M35.800 12.500c2-1.700 4.400-1.700 6.400 0L39 16z" />
                <rect x="56.500" y="2.500" width="27" height="13.500" rx="4" fill="none" stroke="#b5352b" />
                <rect x="58.500" y="4.500" width="23" height="9.500" rx="2" />
                <path d="M85 7.500c2 .7 2 3 0 3.700z" fill="#b5352b" />
              </StatusIcons>
            </StatusBar>
            <NavRow>
              <svg width="14" height="26" fill="none" stroke="#000" strokeWidth="1.700"><path d="M13 1L1.500 13 13 25" /></svg>
              <NavTitle><Text $ls={-0.02}>Brickverse</Text></NavTitle>
              <Capsule>
                <svg width="132" height="49"><circle cx="24" cy="25" r="3" /><circle cx="35" cy="25" r="5" /><circle cx="46" cy="25" r="3" /><circle cx="99" cy="24.500" r="12" fill="none" stroke="#000" strokeWidth="2.200" /><circle cx="99" cy="24.500" r="4.800" /></svg>
              </Capsule>
            </NavRow>
          </PhoneHead>
          <PhoneCopy>
            <PhoneHeading><Text $ls={0.6}>Merry Christmas!</Text></PhoneHeading>
            <PhonePara>
              <Line $ls={0.82}>Join us this Saturday for a <i>joyful</i> C</Line>
              <Line $ls={0.689}>hristmas celebration filled with <b>holi</b></Line>
              <Line $ls={0.678}><b>day cheer</b> <Emo>🎄</Emo><Emo>😊</Emo>. We invite your wh</Line>
              <Line $ls={0.811}>ole family to <i>gather</i> with our comm</Line>
              <Line $ls={0.716}>unity and <b>spread</b> Christmas joy <Emo><Family /></Emo></Line>
              <Line><Emo><Santa /></Emo>.</Line>
            </PhonePara>
            <PhonePara>
              <Line $ls={0.721}><i>Listen</i> and <b>sing along</b> to beloved ca</Line>
              <Line $ls={0.706}>rols performed by our <i>talented</i> musi</Line>
              <Line $ls={0.761}>cians <Emo>🎶</Emo><Emo>🎤</Emo>. <b>Play</b> entertaining holid</Line>
              <Line $ls={0.761}>ay games like snowball toss and or</Line>
              <Line $ls={0.755}>nament ring toss with <b>prizes</b> for all</Line>
              <Line $ls={0.8}>ages <Emo>🎯</Emo><Emo>🏆</Emo>.</Line>
            </PhonePara>
            <PhonePara>
              <Line $ls={0.669}><i>Savor</i> delicious home–cooked Chris</Line>
              <Line $ls={0.843}>tmas treats like hot cocoa, cookies,</Line>
              <Line $ls={0.797}>eggnog and more <Emo>🍪</Emo><Emo>☕</Emo>. <b>Make</b> hear</Line>
              <Line $ls={0.802}>twarming holiday crafts and <i>captur</i></Line>
              <Line $ls={0.793}><i>e</i> the magical memories in our phot</Line>
              <Line $ls={0.852}>o booth <Emo>📸</Emo><Emo>🎨</Emo>. <b>Come delight</b> in the</Line>
              <Line $ls={0.839}>spirit of the season with our <i>festive</i></Line>
              <Line $ls={0.783}>decorations and activities <Emo>🎁</Emo><Emo>✨</Emo>.</Line>
            </PhonePara>
          </PhoneCopy>
        </Phone>
        <Overlay width="1885" height="1041" fill="#fe0000" stroke="#fe0000" strokeWidth="1.500" strokeLinejoin="round">
          <path d="M1145.500 297.500L1382.500 188 1379 181 1408 184.500 1392 209 1389.500 202 1147 301q-2 .5-2.500-1z" />
          <path d="M1212 476.300L952.800 573.500 950.300 565 932 588.300 960.500 593.500 957.500 586.500 1214 479q1-1.500-2-2.700z" />
        </Overlay>
      </Desktop>
    </>
  );
}
